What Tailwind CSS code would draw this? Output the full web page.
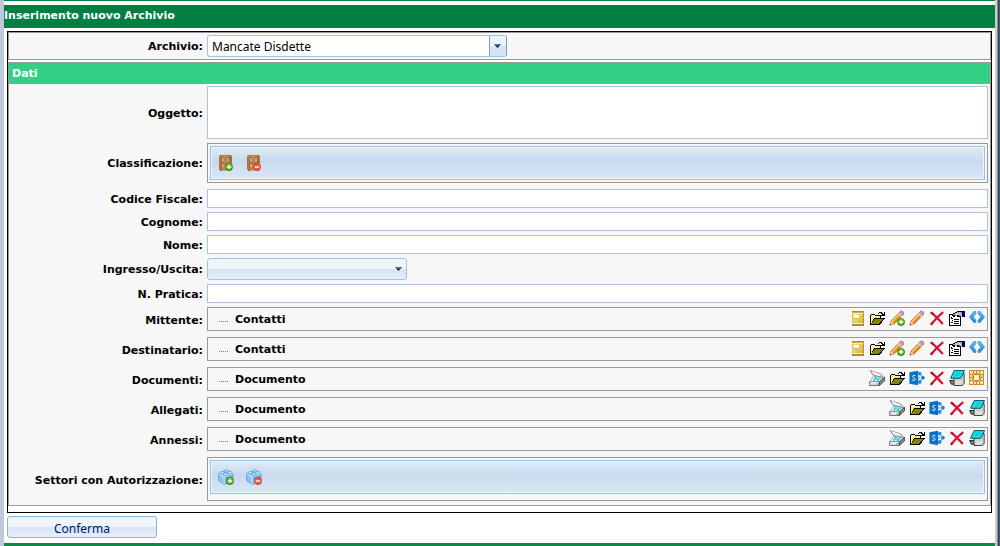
<!DOCTYPE html>
<html lang="it">
<head>
<meta charset="utf-8">
<title>Inserimento nuovo Archivio</title>
<script src="https://cdn.jsdelivr.net/npm/@tailwindcss/browser@4"></script>
</head>
<body class="bg-white text-black font-['Verdana','DejaVu_Sans',sans-serif] text-[11px] leading-4">

<svg width="0" height="0" class="absolute" aria-hidden="true">
  <defs>
    <linearGradient id="gGold" x1="0" y1="0" x2="1" y2="1"><stop offset="0" stop-color="#f6e9a6"/><stop offset="1" stop-color="#d2ab35"/></linearGradient>
    <linearGradient id="gPlus" x1="0" y1="0" x2="0" y2="1"><stop offset="0" stop-color="#6fbf1c"/><stop offset="1" stop-color="#439800"/></linearGradient>
    <linearGradient id="gWood" x1="0" y1="0" x2="1" y2="0"><stop offset="0" stop-color="#b0743f"/><stop offset=".5" stop-color="#d8a06a"/><stop offset="1" stop-color="#9c6333"/></linearGradient>
    <linearGradient id="gArrow" x1="0" y1="0" x2="0" y2="1"><stop offset="0" stop-color="#6fc3f2"/><stop offset="1" stop-color="#1b86d0"/></linearGradient>
  </defs>
  <symbol id="plus" viewBox="0 0 8 8"><circle cx="4" cy="4" r="3.7" fill="url(#gPlus)" stroke="#3b8410" stroke-width=".6"/><path d="M4 1.7v4.6M1.7 4h4.6" stroke="#fff" stroke-width="1.3"/></symbol>
  <symbol id="minus" viewBox="0 0 8 8"><circle cx="4" cy="4" r="3.7" fill="#f2583a" stroke="#d8391f" stroke-width=".6"/><path d="M1.8 4h4.4" stroke="#fff" stroke-width="1.4"/></symbol>
  <symbol id="book" viewBox="0 0 16 16" shape-rendering="crispEdges">
    <rect x="3" y="1" width="12" height="15" fill="url(#gGold)"/>
    <path d="M3 1h12v1H3z" fill="#b58c22"/><path d="M3 2h12v1H3z" fill="#d2ad42"/>
    <path d="M3 14h12v2H3z" fill="#b58c22"/><path d="M4 3h11v1H4zM4 13h11v1H4z" fill="#faf3c4"/>
    <path d="M3 3h1v11H3z" fill="#e3c55c"/><path d="M14 3h1v11h-1z" fill="#b9943a"/>
    <path d="M5 5h5v3H5z" fill="#fffdf0"/><path d="M5 8h5v1H5z" fill="#d9bb58"/>
  </symbol>
  <symbol id="folder" viewBox="0 0 16 16" shape-rendering="crispEdges">
    <path d="M1 5h1V4h4v1h6v3h3v1l-4 6H1z" fill="#000"/>
    <path d="M2 5h4v1h5v2H5v1H4v2H3v2H2z" fill="#f2ea55"/>
    <path d="M3 5h1v1H3zM5 5h1v1H5zM2 6h1v1H2zM4 6h1v1H4zM6 6h1v1H6zM8 6h1v1H8zM10 6h1v1h-1zM3 7h1v1H3zM5 7h1v1H5zM7 7h1v1H7zM2 8h1v1H2zM3 9h1v1H3zM2 10h1v1H2z" fill="#fffce0"/>
    <path d="M5 9h9v1h-1v1h-1v1h-1v1h-1v1H2v-1h1v-1h1v-1h1z" fill="#858500"/>
    <path d="M14 8h2v1h-1v1h-1v1h-1v1h-1v1h-1v1h-1v1h-1v-1h1v-1h1v-1h1v-1h1v-1h1V9h0z" fill="#000"/>
    <path d="M9 3h1V2h3v1h1v1h1V2h1v4h-4V5h1V4h-1V3h-2v1H9z" fill="#000"/>
  </symbol>
  <symbol id="pencil" viewBox="0 0 16 16">
    <path d="M1 15l1.2-4.2L11.4 1.4q1.4-.9 2.6.4t.4 2.6L5.2 13.8z" fill="#f39a2c" stroke="#b8651a" stroke-width=".8"/>
    <path d="M3 11.5L11 3.4" stroke="#ffd08a" stroke-width="1.3"/>
    <path d="M4.6 13.2L12.8 5" stroke="#d87812" stroke-width="1"/>
    <path d="M10 2.8l1.6-1.5q1.3-.8 2.5.3t.3 2.7L12.8 6z" fill="#c99ac9" stroke="#a376a8" stroke-width=".5"/>
    <path d="M9.4 3.4l3.2 3.2" stroke="#e4e0d8" stroke-width="1.3"/>
    <path d="M1 15l1-3.4 2.5 2.5z" fill="#f0dcc0"/><path d="M.7 15.4l.6-1.8 1.3 1.2z" fill="#444"/>
  </symbol>
  <symbol id="cross" viewBox="0 0 16 16"><path d="M2.4 2.6Q8 7 13.8 14M14.2 2.2Q7.6 7.2 2.2 14.4" fill="none" stroke="#d8122f" stroke-width="2.2"/><path d="M1.6 2.2l3.2 2.4M1.8 14.8l2-2.6" stroke="#c20d2a" stroke-width="2"/></symbol>
  <symbol id="props" viewBox="0 0 16 16" shape-rendering="crispEdges">
    <path d="M0 4h12v12H0z" fill="#000"/><path d="M1 5h10v10H1z" fill="#fff"/>
    <path d="M2 8h2v1H2zM2 12h2v1H2zM5 9h5v1H5zM5 11h5v1H5zM5 13h5v1H5zM3 10h1v1H3zM2 7h1v1H2z" fill="#000"/>
    <path d="M3 4h1V3h2V2h2V1h5v5h-2v1H8V6H6v1H4V6H3z" fill="#000"/>
    <path d="M4 4h2V3h2V2h5v4h-3V5H8v1H6V5H4z" fill="#a6a6a6"/>
    <path d="M6 3h1v1H6zM8 3h1v1H8zM10 3h1v1h-1zM7 4h1v1H7zM9 4h1v1H9zM11 4h1v1h-1z" fill="#eee"/>
    <path d="M13 1h3v6h-3z" fill="#000080"/><path d="M13 1h1v5h-1z" fill="#0b0b28"/>
  </symbol>
  <symbol id="code" viewBox="0 0 16 16"><path d="M4.8 1.6h2v2.2L4 7l2.8 3.2v2.2h-2L.5 7zM11.2 1.6h-2v2.2L12 7l-2.8 3.2v2.2h2L15.500 7z" fill="url(#gArrow)" stroke="#2a8fd0" stroke-width=".8" stroke-linejoin="round"/></symbol>
  <symbol id="scanner" viewBox="0 0 16 16">
    <path d="M1.200 .6L4.400 5.400 14.600 7.600 11.600 4z" fill="#ececec" stroke="#747474" stroke-width=".9" stroke-linejoin="round"/>
    <path d="M2.600 1.600l8.600 3.200" stroke="#fff"/>
    <path d="M4.200 6.400l10.400 1.400L10.400 12H.8z" fill="#f0fafc" stroke="#8a9a9e" stroke-width=".7"/>
    <path d="M5.200 7.200h2.600v1.400h2V7.800h2.600l-1 1.400H10v1.800H7.800V9.600H6v1.200H4.200V9h1z" fill="#18d0ea"/>
    <path d="M.6 11.800h9.800v3.700H.6z" fill="#d8d8d8" stroke="#6c6c6c" stroke-width=".9"/>
    <path d="M10.400 11.800l5.200-4.600v3.600l-5.200 4.700z" fill="#8a8a8a" stroke="#333" stroke-width=".8"/>
    <path d="M1.500 12.800h8" stroke="#fff"/><path d="M7.500 13.500h2v1h-2z" fill="#12b83e"/>
  </symbol>
  <symbol id="share" viewBox="0 0 16 16">
    <path d="M10 3.500h1.500M10 12h1.500M11.200 3.800L14 7.700l-2.800 4" fill="none" stroke="#62aee6" stroke-width="1.2"/>
    <circle cx="10.600" cy="3.600" r="1.900" fill="#2a8bdc"/><circle cx="14" cy="7.700" r="1.800" fill="#1479d0"/><circle cx="10.600" cy="12" r="1.900" fill="#2a8bdc"/>
    <path d="M9 6.600h2.400v2.400H9z" fill="#8fc6f0"/>
    <path d="M.4 2.300L9 .8v14.400L.4 13.700z" fill="#0a70c6"/>
    <path d="M6.300 5.700Q3.500 4.900 3.500 6.500C3.600 7.800 6.200 7.800 6.200 9.300q-.1 1.600-3 .8" fill="none" stroke="#fff" stroke-width="1"/>
  </symbol>
  <symbol id="note" viewBox="0 0 16 16">
    <path d="M.6 10.600h5v3.600H2.400z" fill="#8a8a8a" stroke="#111" stroke-width=".9"/>
    <path d="M6 5l9.200-1.500v9.700l-1.800 2.300H5V9z" fill="#cfcfcf" stroke="#333" stroke-width=".9"/>
    <path d="M6.500 12h7M6.500 14h6" stroke="#ededed"/>
    <path d="M5.200.6h10.300l-3.700 7.600H1.600z" fill="#12eaf0" stroke="#063a40" stroke-width=".9"/>
    <path d="M6.400 3.200h5.800M5.600 5.200h5.600" stroke="#0bb0bc" stroke-width=".8"/>
  </symbol>
  <symbol id="chip" viewBox="0 0 16 16" shape-rendering="crispEdges">
    <path d="M0 0h15v15H0z" fill="#d38a2c"/><path d="M1 1h13v13H1z" fill="#ffe9b4"/>
    <path d="M4 1h1v2H4zM7 1h1v2H7zM10 1h1v2h-1zM4 12h1v2H4zM7 12h1v2H7zM10 12h1v2h-1zM1 4h2v1H1zM1 7h3v1H1zM1 10h2v1H1zM12 4h2v1h-2zM11 7h3v1h-3zM12 10h2v1h-2z" fill="#cf7f1a"/>
    <path d="M3 3h9v1H3zM3 11h9v1H3zM3 3h1v9H3zM11 3h1v9h-1z" fill="#e0a048"/>
    <path d="M5 4h5v1h1v5h-1v1H5v-1H4V5h1z" fill="#c8781a"/><path d="M5 5h5v5H5z" fill="#fff3cf"/>
  </symbol>
  <symbol id="cabinet" viewBox="0 0 16 16">
    <rect x="1.500" y=".5" width="12" height="14.500" rx="1" fill="url(#gWood)" stroke="#a56b3a" stroke-width=".9"/>
    <path d="M3.500 2.700h8v4.200h-8zM3.500 8.500h8v4.400h-8z" fill="#dcb080" stroke="#8a5a30" stroke-width=".8"/>
    <path d="M4.500 4h6M4.500 9.800h6" stroke="#b98652" stroke-width=".8"/><path d="M6.200 5h2.600M6.200 10.800h2.600" stroke="#55504e" stroke-width="1"/>
    <path d="M2 15.500h2M11 15.500h2" stroke="#6d421d" stroke-width=".8"/>
  </symbol>
  <symbol id="block" viewBox="0 0 16 16">
    <path d="M0.400 4.600L8.500 1.400 15 4.400v7L6.400 15.400.8 11.600z" fill="#8fc5f5" stroke="#4a92d6" stroke-width=".8"/>
    <path d="M6.200 7.600L15 4.400v7l-8.600 4z" fill="#6cadec"/>
    <path d="M.4 4.800l5.800 2.800L15 4.400M6.200 7.600v7.400" fill="none" stroke="#e4f3ff" stroke-width=".9"/>
    <g fill="#c5e3fd" stroke="#4a92d6" stroke-width=".6"><ellipse cx="8.400" cy="1.800" rx="2.200" ry="1.200"/><ellipse cx="4.200" cy="3.800" rx="2.200" ry="1.300"/><ellipse cx="11.800" cy="3.400" rx="2.200" ry="1.200"/><ellipse cx="7.600" cy="5.200" rx="2.200" ry="1.300"/></g>
  </symbol>
  <symbol id="down" viewBox="0 0 7 4" shape-rendering="crispEdges"><path d="M0 0h7v1H0z" fill="#5b76b8"/><path d="M1 1h5v1H1z" fill="#3c4f91"/><path d="M2 2h3v1H2zM3 3h1v1H3z" fill="#26356b"/></symbol>
</svg>

<div class="flex min-h-screen">
  <div class="w-1 bg-[#bccadc]"></div>

  <form class="flex min-w-0 flex-1 flex-col border-t border-[#007f43]">
    <h1 class="mt-1 h-[23px] bg-[#007f43] leading-[22px] font-bold text-white">Inserimento nuovo Archivio</h1>

    <div class="mx-[3px] mt-[3px] border border-black pb-1.5 font-bold">
      <div class="flex h-7 items-center gap-1 border border-[#999] bg-[#f7f7f7]">
        <label for="archivio" class="w-[194px] pt-0.5 text-right">Archivio:</label>
        <div class="flex h-[22px] w-[300px] overflow-hidden rounded-[3px] border border-[#a9c1de] border-r-[#6f9bc8] bg-white">
          <input id="archivio" value="Mancate Disdette" class="min-w-0 flex-1 px-1 pt-0.5 font-['Segoe_UI','Noto_Sans',sans-serif] text-xs font-normal outline-none">
          <button type="button" aria-label="Apri elenco" class="flex w-[17px] items-center justify-center border-l border-[#7f9fc6] bg-linear-to-b from-[#eff3fa] from-50% to-[#d5e3f5] to-50% pr-px"><svg class="h-1 w-[7px]"><use href="#down"/></svg></button>
        </div>
      </div>

      <section class="mt-0.5 border border-[#999] bg-[#f7f7f7] pb-1">
        <h2 class="h-[21px] border-b border-[#999] bg-[#33cf85] px-[3px] leading-[22px] text-white">Dati</h2>

        <div class="flex flex-col gap-1 pt-0.5 pr-0.5">
          <div class="flex items-center gap-1">
            <label for="oggetto" class="w-[194px] pt-0.5 text-right">Oggetto:</label>
            <textarea id="oggetto" class="block h-[53px] min-w-0 flex-1 resize-none border border-[#abc1de] bg-white outline-none"></textarea>
          </div>

          <div class="mb-0.5 flex items-center gap-1">
            <span class="w-[194px] pt-0.5 text-right">Classificazione:</span>
            <div class="flex-1 border border-[#999] p-0.5">
              <div role="toolbar" aria-label="Classificazione" class="h-[34px] border border-[#9fbfde] bg-[#edf4fc] p-px">
                <div class="flex h-full items-center gap-3 bg-linear-to-b from-[#dde9f6] via-[#c8daee] via-45% to-[#d8e7f7] px-1.5">
                  <button type="button" aria-label="Aggiungi classificazione" class="h-4 w-4"><svg class="h-4 w-4" viewBox="0 0 16 16"><use href="#cabinet"/><use href="#plus" x="7" y="8" width="8" height="8"/></svg></button>
                  <button type="button" aria-label="Rimuovi classificazione" class="h-4 w-4"><svg class="h-4 w-4" viewBox="0 0 16 16"><use href="#cabinet"/><use href="#minus" x="7" y="8" width="8" height="8"/></svg></button>
                </div>
              </div>
            </div>
          </div>

          <div class="flex items-center gap-1">
            <label for="cf" class="w-[194px] pt-0.5 text-right">Codice Fiscale:</label>
            <input id="cf" class="h-[19px] min-w-0 flex-1 border border-[#abc1de] bg-white px-1 outline-none">
          </div>
          <div class="flex items-center gap-1">
            <label for="cognome" class="w-[194px] pt-0.5 text-right">Cognome:</label>
            <input id="cognome" class="h-[19px] min-w-0 flex-1 border border-[#abc1de] bg-white px-1 outline-none">
          </div>
          <div class="flex items-center gap-1">
            <label for="nome" class="w-[194px] pt-0.5 text-right">Nome:</label>
            <input id="nome" class="h-[19px] min-w-0 flex-1 border border-[#abc1de] bg-white px-1 outline-none">
          </div>
          <div class="flex items-center gap-1">
            <label for="io" class="w-[194px] pt-0.5 text-right">Ingresso/Uscita:</label>
            <div class="relative h-[22px] w-[200px]">
              <select id="io" class="h-full w-full appearance-none rounded-[3px] border border-[#a3c0e0] bg-linear-to-b from-[#eff3fa] from-50% via-[#d3e2f4] via-50% to-[#e6f0fa] outline-none"><option></option></select>
              <svg class="pointer-events-none absolute top-[9px] right-[5px] h-1 w-[7px]"><use href="#down"/></svg>
            </div>
          </div>
          <div class="flex items-center gap-1">
            <label for="pratica" class="w-[194px] pt-0.5 text-right">N. Pratica:</label>
            <input id="pratica" class="h-[19px] min-w-0 flex-1 border border-[#abc1de] bg-white px-1 outline-none">
          </div>

          <div class="flex flex-col gap-1.5">
            <div class="flex items-center gap-1">
              <span class="w-[194px] pt-1 text-right">Mittente:</span>
              <div class="flex h-6 flex-1 items-center border border-[#999] pr-0.5 pl-[11px]">
                <span class="mt-1 mr-[7px] w-[9px] border-t border-dotted border-[#777]"></span><span class="flex-1 pt-0.5">Contatti</span>
                <div class="flex gap-1 pb-0.5">
                  <button type="button" aria-label="Rubrica" class="h-4 w-4"><svg class="h-4 w-4"><use href="#book"/></svg></button>
                  <button type="button" aria-label="Apri" class="h-4 w-4"><svg class="h-4 w-4"><use href="#folder"/></svg></button>
                  <button type="button" aria-label="Nuovo" class="h-4 w-4"><svg class="h-4 w-4" viewBox="0 0 16 16"><use href="#pencil"/><use href="#plus" x="8" y="8" width="8" height="8"/></svg></button>
                  <button type="button" aria-label="Modifica" class="h-4 w-4"><svg class="h-4 w-4"><use href="#pencil"/></svg></button>
                  <button type="button" aria-label="Elimina" class="h-4 w-4"><svg class="h-4 w-4"><use href="#cross"/></svg></button>
                  <button type="button" aria-label="Proprietà" class="h-4 w-4"><svg class="h-4 w-4"><use href="#props"/></svg></button>
                  <button type="button" aria-label="Codice" class="h-4 w-4"><svg class="h-4 w-4"><use href="#code"/></svg></button>
                </div>
              </div>
            </div>
            <div class="flex items-center gap-1">
              <span class="w-[194px] pt-1 text-right">Destinatario:</span>
              <div class="flex h-6 flex-1 items-center border border-[#999] pr-0.5 pl-[11px]">
                <span class="mt-1 mr-[7px] w-[9px] border-t border-dotted border-[#777]"></span><span class="flex-1 pt-0.5">Contatti</span>
                <div class="flex gap-1 pb-0.5">
                  <button type="button" aria-label="Rubrica" class="h-4 w-4"><svg class="h-4 w-4"><use href="#book"/></svg></button>
                  <button type="button" aria-label="Apri" class="h-4 w-4"><svg class="h-4 w-4"><use href="#folder"/></svg></button>
                  <button type="button" aria-label="Nuovo" class="h-4 w-4"><svg class="h-4 w-4" viewBox="0 0 16 16"><use href="#pencil"/><use href="#plus" x="8" y="8" width="8" height="8"/></svg></button>
                  <button type="button" aria-label="Modifica" class="h-4 w-4"><svg class="h-4 w-4"><use href="#pencil"/></svg></button>
                  <button type="button" aria-label="Elimina" class="h-4 w-4"><svg class="h-4 w-4"><use href="#cross"/></svg></button>
                  <button type="button" aria-label="Proprietà" class="h-4 w-4"><svg class="h-4 w-4"><use href="#props"/></svg></button>
                  <button type="button" aria-label="Codice" class="h-4 w-4"><svg class="h-4 w-4"><use href="#code"/></svg></button>
                </div>
              </div>
            </div>
            <div class="flex items-center gap-1">
              <span class="w-[194px] pt-1 text-right">Documenti:</span>
              <div class="flex h-6 flex-1 items-center border border-[#999] pr-0.5 pl-[11px]">
                <span class="mt-1 mr-[7px] w-[9px] border-t border-dotted border-[#777]"></span><span class="flex-1 pt-0.5">Documento</span>
                <div class="flex gap-1 pb-0.5">
                  <button type="button" aria-label="Scansiona" class="h-4 w-4"><svg class="h-4 w-4"><use href="#scanner"/></svg></button>
                  <button type="button" aria-label="Apri" class="h-4 w-4"><svg class="h-4 w-4"><use href="#folder"/></svg></button>
                  <button type="button" aria-label="SharePoint" class="h-4 w-4"><svg class="h-4 w-4"><use href="#share"/></svg></button>
                  <button type="button" aria-label="Elimina" class="h-4 w-4"><svg class="h-4 w-4"><use href="#cross"/></svg></button>
                  <button type="button" aria-label="Note" class="h-4 w-4"><svg class="h-4 w-4"><use href="#note"/></svg></button>
                  <button type="button" aria-label="Firma" class="h-4 w-4"><svg class="h-4 w-4"><use href="#chip"/></svg></button>
                </div>
              </div>
            </div>
            <div class="flex items-center gap-1">
              <span class="w-[194px] pt-1 text-right">Allegati:</span>
              <div class="flex h-6 flex-1 items-center border border-[#999] pr-0.5 pl-[11px]">
                <span class="mt-1 mr-[7px] w-[9px] border-t border-dotted border-[#777]"></span><span class="flex-1 pt-0.5">Documento</span>
                <div class="flex gap-1 pb-0.5">
                  <button type="button" aria-label="Scansiona" class="h-4 w-4"><svg class="h-4 w-4"><use href="#scanner"/></svg></button>
                  <button type="button" aria-label="Apri" class="h-4 w-4"><svg class="h-4 w-4"><use href="#folder"/></svg></button>
                  <button type="button" aria-label="SharePoint" class="h-4 w-4"><svg class="h-4 w-4"><use href="#share"/></svg></button>
                  <button type="button" aria-label="Elimina" class="h-4 w-4"><svg class="h-4 w-4"><use href="#cross"/></svg></button>
                  <button type="button" aria-label="Note" class="h-4 w-4"><svg class="h-4 w-4"><use href="#note"/></svg></button>
                </div>
              </div>
            </div>
            <div class="flex items-center gap-1">
              <span class="w-[194px] pt-1 text-right">Annessi:</span>
              <div class="flex h-6 flex-1 items-center border border-[#999] pr-0.5 pl-[11px]">
                <span class="mt-1 mr-[7px] w-[9px] border-t border-dotted border-[#777]"></span><span class="flex-1 pt-0.5">Documento</span>
                <div class="flex gap-1 pb-0.5">
                  <button type="button" aria-label="Scansiona" class="h-4 w-4"><svg class="h-4 w-4"><use href="#scanner"/></svg></button>
                  <button type="button" aria-label="Apri" class="h-4 w-4"><svg class="h-4 w-4"><use href="#folder"/></svg></button>
                  <button type="button" aria-label="SharePoint" class="h-4 w-4"><svg class="h-4 w-4"><use href="#share"/></svg></button>
                  <button type="button" aria-label="Elimina" class="h-4 w-4"><svg class="h-4 w-4"><use href="#cross"/></svg></button>
                  <button type="button" aria-label="Note" class="h-4 w-4"><svg class="h-4 w-4"><use href="#note"/></svg></button>
                </div>
              </div>
            </div>

            <div class="flex items-center gap-1">
              <span class="w-[194px] pt-1 text-right whitespace-nowrap">Settori con Autorizzazione:</span>
              <div class="flex-1 border border-[#999] p-0.5 pb-1.5">
                <div role="toolbar" aria-label="Settori con Autorizzazione" class="h-[34px] border border-[#9fbfde] bg-[#edf4fc] p-px">
                  <div class="flex h-full items-center gap-3 bg-linear-to-b from-[#dde9f6] via-[#c8daee] via-45% to-[#d8e7f7] px-1.5">
                    <button type="button" aria-label="Aggiungi settore" class="h-4 w-4"><svg class="h-4 w-4" viewBox="0 0 16 16"><use href="#block"/><use href="#plus" x="8" y="8" width="8" height="8"/></svg></button>
                    <button type="button" aria-label="Rimuovi settore" class="h-4 w-4"><svg class="h-4 w-4" viewBox="0 0 16 16"><use href="#block"/><use href="#minus" x="8" y="8" width="8" height="8"/></svg></button>
                  </div>
                </div>
              </div>
            </div>
          </div>
        </div>
      </section>
    </div>

    <button type="submit" class="mt-[3px] ml-[3px] h-[22px] w-[150px] rounded-[3px] border border-[#8fb2da] bg-linear-to-b from-[#f0f4fb] from-50% via-[#d5e4f5] via-50% to-[#e6f0fa] pt-0.5 font-['Segoe_UI','Noto_Sans',sans-serif] text-xs leading-5 text-[#00156e]">Conferma</button>
    <div class="mt-auto h-[3px] bg-[#0b8a48]"></div>
  </form>

  <div class="flex w-[5px]">
    <div class="w-0.5 bg-[#cfcdc8]"></div>
    <div class="w-px bg-[#8a8a88]"></div>
    <div class="w-px bg-[#3f4144]"></div>
    <div class="w-px bg-[#2f5f8d]"></div>
  </div>
</div>
</body>
</html>
